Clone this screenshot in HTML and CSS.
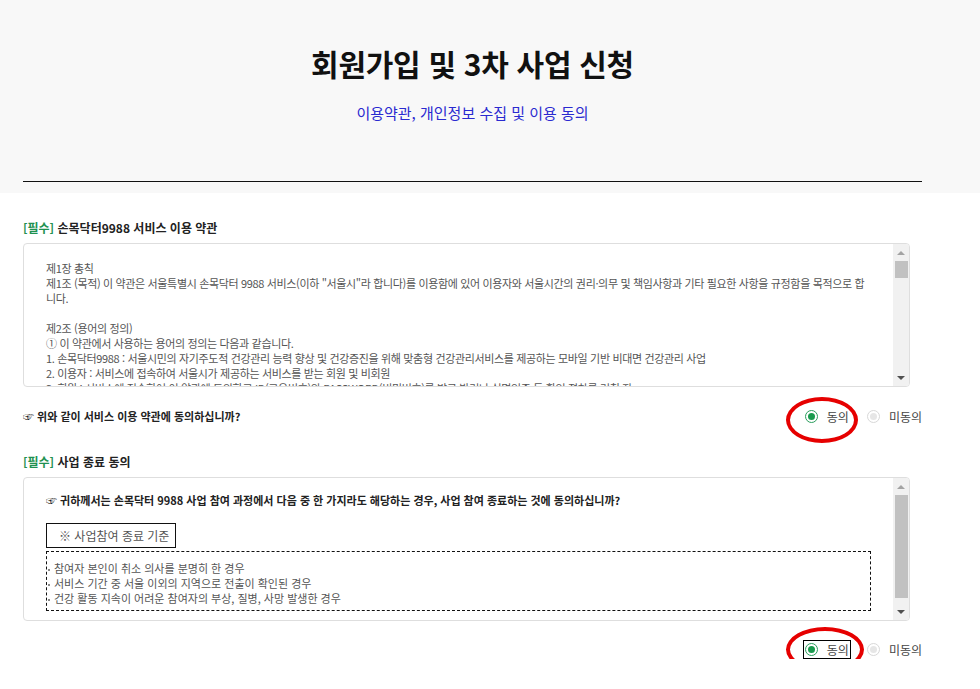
FILE: index.html
```html
<!DOCTYPE html>
<html lang="ko">
<head>
    <meta charset="UTF-8">
    <meta name="viewport" content="width=device-width, initial-scale=1.0">
    <title>회원가입 및 3차 사업 신청</title>
    <link rel="stylesheet" href="styles.css">
</head>
<body>
    <header class="page-head">
        <div class="wrap">
            <h1 class="title">회원가입 및 3차 사업 신청</h1>
            <p class="subtitle">이용약관, 개인정보 수집 및 이용 동의</p>
            <hr class="head-line">
        </div>
    </header>

    <main class="wrap">
        <!-- 이용 약관 -->
        <section class="agree-block">
            <h2 class="agree-title"><span class="req">[필수]</span> 손목닥터9988 서비스 이용 약관</h2>
            <div class="terms-box">
                <div class="terms-text first">
                    제1장 총칙<br>
                    제1조 (목적) 이 약관은 서울특별시 손목닥터 9988 서비스(이하 "서울시"라 합니다)를 이용함에 있어 이용자와 서울시간의 권리·의무 및 책임사항과 기타 필요한 사항을 규정함을 목적으로 합<br>
                    니다.<br>
                    <br>
                    제2조 (용어의 정의)<br>
                    ① 이 약관에서 사용하는 용어의 정의는 다음과 같습니다.<br>
                    1. 손목닥터9988 : 서울시민의 자기주도적 건강관리 능력 향상 및 건강증진을 위해 맞춤형 건강관리서비스를 제공하는 모바일 기반 비대면 건강관리 사업<br>
                    2. 이용자 : 서비스에 접속하여 서울시가 제공하는 서비스를 받는 회원 및 비회원<br>
                    3. 회원 : 서비스에 접속하여 이 약관에 동의하고 ID(고유번호)와 PASSWORD(비밀번호)를 발급 받거나 실명인증 등 확인 절차를 거친 자
                </div>
                <div class="scrollbar">
                    <span class="arrow up"></span>
                    <div class="track"><span class="thumb small"></span></div>
                    <span class="arrow down"></span>
                </div>
            </div>
            <div class="question-row">
                <p class="question">☞ 위와 같이 서비스 이용 약관에 동의하십니까?</p>
                <div class="radio-group">
                    <label class="opt"><span class="dot checked"></span>동의</label>
                    <label class="opt"><span class="dot"></span>미동의</label>
                </div>
            </div>
        </section>

        <!-- 사업 종료 동의 -->
        <section class="agree-block second">
            <h2 class="agree-title"><span class="req">[필수]</span> 사업 종료 동의</h2>
            <div class="terms-box">
                <div class="terms-text">
                    <p class="question inner">☞ 귀하께서는 손목닥터 9988 사업 참여 과정에서 다음 중 한 가지라도 해당하는 경우, 사업 참여 종료하는 것에 동의하십니까?</p>
                    <div class="criteria-tag">※ 사업참여 종료 기준</div>
                    <ul class="criteria">
                        <li>참여자 본인이 취소 의사를 분명히 한 경우</li>
                        <li>서비스 기간 중 서울 이외의 지역으로 전출이 확인된 경우</li>
                        <li>건강 활동 지속이 어려운 참여자의 부상, 질병, 사망 발생한 경우</li>
                    </ul>
                </div>
                <div class="scrollbar">
                    <span class="arrow up"></span>
                    <div class="track"><span class="thumb big"></span></div>
                    <span class="arrow down"></span>
                </div>
            </div>
            <div class="question-row end">
                <div class="radio-group">
                    <label class="opt focused"><span class="dot checked"></span>동의</label>
                    <label class="opt"><span class="dot"></span>미동의</label>
                </div>
            </div>
        </section>
    </main>

    <!-- red marks drawn over the screenshot -->
    <span class="mark mark-one"></span>
    <span class="mark mark-two"></span>
</body>
</html>
```

FILE: styles.css
```css
body {
    margin: 0;
    font-family: 'Noto Sans CJK KR', 'Noto Sans', sans-serif;
    color: #222;
    background: #fff;
    position: relative;
}

.wrap {
    width: 899px;
    padding-left: 23px;
}

.page-head {
    background: #f8f8f8;
    padding: 42px 0 11px;
}

.title {
    margin: 0;
    text-align: center;
    font-size: 30px;
    line-height: 42px;
    font-weight: 700;
    color: #111;
    letter-spacing: -0.3px;
}

.subtitle {
    margin: 19px 0 0;
    text-align: center;
    font-size: 15px;
    line-height: 20px;
    color: #2a2ad0;
}

.head-line {
    margin: 58px 0 0;
    border: 0;
    border-top: 1px solid #111;
    height: 0;
}

.agree-block {
    padding-top: 26px;
}

.agree-block.second {
    padding-top: 27px;
}

.agree-title {
    margin: 0 0 6px;
    font-size: 12px;
    line-height: 18px;
    font-weight: 700;
    color: #222;
}

.req {
    color: #1f9150;
}

.terms-box {
    display: flex;
    width: 887px;
    height: 144px;
    box-sizing: border-box;
    border: 1px solid #dedede;
    border-radius: 4px;
    overflow: hidden;
}

.terms-text {
    flex: 1;
    overflow: hidden;
    padding: 15px 22px 0;
    font-size: 11px;
    line-height: 15px;
    color: #555;
    white-space: nowrap;
}

.terms-text.first {
    padding-top: 17px;
    letter-spacing: -0.35px;
}

.scrollbar {
    width: 16px;
    background: #f1f1f1;
    display: flex;
    flex-direction: column;
    align-items: center;
}

.arrow {
    height: 17px;
    width: 16px;
    display: flex;
    justify-content: center;
    align-items: center;
}

.arrow::before {
    content: '';
    border-left: 4px solid transparent;
    border-right: 4px solid transparent;
}

.arrow.up::before {
    border-bottom: 4px solid #a3a3a3;
}

.arrow.down::before {
    border-top: 4px solid #505050;
}

.track {
    flex: 1;
    width: 13px;
}

.thumb {
    display: block;
    width: 13px;
    background: #c1c1c1;
}

.thumb.small { height: 17px; }
.thumb.big { height: 103px; }

.question-row {
    display: flex;
    justify-content: space-between;
    align-items: center;
    height: 20px;
    margin-top: 19px;
}

.question-row.end {
    justify-content: flex-end;
    margin-top: 18px;
}

.question {
    margin: 0;
    font-size: 11px;
    font-weight: 700;
    color: #222;
}

.question.inner {
    line-height: 15px;
}

.radio-group {
    display: flex;
    align-items: center;
    gap: 14px;
    margin-right: -2px;
}

.opt {
    display: flex;
    align-items: center;
    gap: 9px;
    font-size: 12px;
    line-height: 17px;
    color: #444;
    padding: 0 1px;
    border: 1px solid transparent;
}

.opt.focused {
    border-color: #000;
}

.dot {
    width: 11px;
    height: 11px;
    border: 1px solid #d8d8d8;
    border-radius: 50%;
    display: flex;
    justify-content: center;
    align-items: center;
}

.dot::after {
    content: '';
    width: 7px;
    height: 7px;
    border-radius: 50%;
    background: #e6e6e6;
}

.dot.checked {
    border-color: #2a9d5c;
}

.dot.checked::after {
    background: #1a9a4e;
}

.criteria-tag {
    margin-top: 15px;
    width: 130px;
    height: 25px;
    box-sizing: border-box;
    border: 1px solid #111;
    padding-left: 12px;
    font-size: 12px;
    line-height: 23px;
    color: #555;
}

.criteria {
    list-style: none;
    margin: 3px 0 0;
    padding: 9px 0 4px;
    width: 825px;
    box-sizing: border-box;
    border: 1px dashed #111;
}

.criteria li::before {
    content: '';
    display: inline-block;
    width: 2px;
    height: 2px;
    background: #888;
    vertical-align: middle;
    margin: 0 4px 0 1px;
}

.mark {
    position: absolute;
    border: 4px solid #e60000;
    border-radius: 50%;
    box-sizing: border-box;
}

.mark-one {
    left: 786px;
    top: 397px;
    width: 72px;
    height: 46px;
}

.mark-two {
    left: 786px;
    top: 627px;
    width: 78px;
    height: 45px;
}
```
